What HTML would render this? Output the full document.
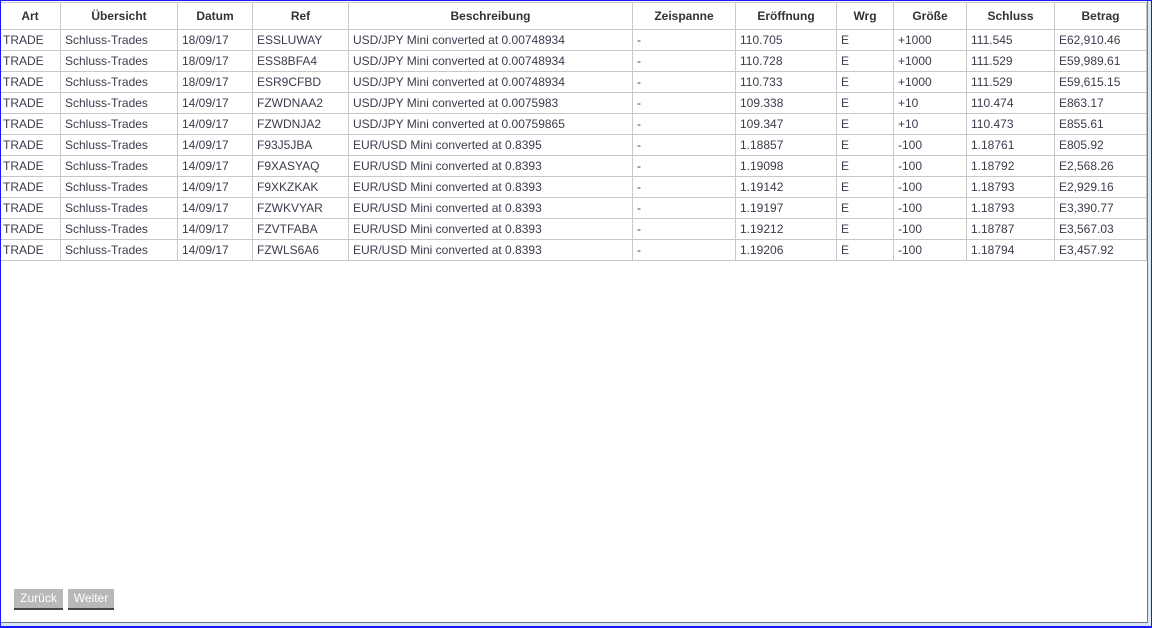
<!DOCTYPE html>
<html><head><meta charset="utf-8"><style>
html,body{margin:0;padding:0;}
body{width:1152px;height:628px;position:relative;overflow:hidden;background:#fff;font-family:"Liberation Sans",Arial,sans-serif;}
.bl{position:absolute;left:0;top:0;width:1px;height:628px;background:#1a1aff;}
.bt{position:absolute;left:0;top:0;width:1152px;height:1px;background:#1a1aff;}
.br{position:absolute;left:1151px;top:0;width:1px;height:628px;background:#1a1aff;}
.brg{position:absolute;left:1147px;top:0;width:1px;height:623px;background:#777;}
.brl{position:absolute;left:1148px;top:0;width:3px;height:626px;background:#dde8f6;}
.bbg{position:absolute;left:0;top:622px;width:1148px;height:1px;background:#777;}
.bbl{position:absolute;left:0;top:623px;width:1151px;height:3px;background:#d6e6fa;}
.bb{position:absolute;left:0;top:626px;width:1152px;height:2px;background:#1a1aff;}
table{position:absolute;left:-1px;top:2px;border-collapse:collapse;table-layout:fixed;width:1147px;font-size:12px;color:#3e3a4c;}
th,td{border:1px solid #c8c8c8;padding:0 0 0 4px;white-space:nowrap;overflow:hidden;text-align:left;}
th{height:26px;font-weight:bold;color:#333;text-align:center;padding:0;}
td{height:20px;}
td:first-child{padding-left:3px;}
.btn{position:absolute;top:589px;height:19px;background:#b8b8b8;color:#fff;font-size:12px;line-height:19px;text-align:center;border-bottom:2px solid #444;}
</style></head><body>
<table>
<colgroup><col style="width:61px"><col style="width:117px"><col style="width:75px"><col style="width:96px"><col style="width:284px"><col style="width:103px"><col style="width:101px"><col style="width:57px"><col style="width:73px"><col style="width:88px"><col style="width:92px"></colgroup>
<tr><th>Art</th><th>Übersicht</th><th>Datum</th><th>Ref</th><th>Beschreibung</th><th>Zeispanne</th><th>Eröffnung</th><th>Wrg</th><th>Größe</th><th>Schluss</th><th>Betrag</th></tr>
<tr><td>TRADE</td><td>Schluss-Trades</td><td>18/09/17</td><td>ESSLUWAY</td><td>USD/JPY Mini converted at 0.00748934</td><td>-</td><td>110.705</td><td>E</td><td>+1000</td><td>111.545</td><td>E62,910.46</td></tr>
<tr><td>TRADE</td><td>Schluss-Trades</td><td>18/09/17</td><td>ESS8BFA4</td><td>USD/JPY Mini converted at 0.00748934</td><td>-</td><td>110.728</td><td>E</td><td>+1000</td><td>111.529</td><td>E59,989.61</td></tr>
<tr><td>TRADE</td><td>Schluss-Trades</td><td>18/09/17</td><td>ESR9CFBD</td><td>USD/JPY Mini converted at 0.00748934</td><td>-</td><td>110.733</td><td>E</td><td>+1000</td><td>111.529</td><td>E59,615.15</td></tr>
<tr><td>TRADE</td><td>Schluss-Trades</td><td>14/09/17</td><td>FZWDNAA2</td><td>USD/JPY Mini converted at 0.0075983</td><td>-</td><td>109.338</td><td>E</td><td>+10</td><td>110.474</td><td>E863.17</td></tr>
<tr><td>TRADE</td><td>Schluss-Trades</td><td>14/09/17</td><td>FZWDNJA2</td><td>USD/JPY Mini converted at 0.00759865</td><td>-</td><td>109.347</td><td>E</td><td>+10</td><td>110.473</td><td>E855.61</td></tr>
<tr><td>TRADE</td><td>Schluss-Trades</td><td>14/09/17</td><td>F93J5JBA</td><td>EUR/USD Mini converted at 0.8395</td><td>-</td><td>1.18857</td><td>E</td><td>-100</td><td>1.18761</td><td>E805.92</td></tr>
<tr><td>TRADE</td><td>Schluss-Trades</td><td>14/09/17</td><td>F9XASYAQ</td><td>EUR/USD Mini converted at 0.8393</td><td>-</td><td>1.19098</td><td>E</td><td>-100</td><td>1.18792</td><td>E2,568.26</td></tr>
<tr><td>TRADE</td><td>Schluss-Trades</td><td>14/09/17</td><td>F9XKZKAK</td><td>EUR/USD Mini converted at 0.8393</td><td>-</td><td>1.19142</td><td>E</td><td>-100</td><td>1.18793</td><td>E2,929.16</td></tr>
<tr><td>TRADE</td><td>Schluss-Trades</td><td>14/09/17</td><td>FZWKVYAR</td><td>EUR/USD Mini converted at 0.8393</td><td>-</td><td>1.19197</td><td>E</td><td>-100</td><td>1.18793</td><td>E3,390.77</td></tr>
<tr><td>TRADE</td><td>Schluss-Trades</td><td>14/09/17</td><td>FZVTFABA</td><td>EUR/USD Mini converted at 0.8393</td><td>-</td><td>1.19212</td><td>E</td><td>-100</td><td>1.18787</td><td>E3,567.03</td></tr>
<tr><td>TRADE</td><td>Schluss-Trades</td><td>14/09/17</td><td>FZWLS6A6</td><td>EUR/USD Mini converted at 0.8393</td><td>-</td><td>1.19206</td><td>E</td><td>-100</td><td>1.18794</td><td>E3,457.92</td></tr>
</table>
<div class="btn" style="left:14px;width:49px;">Zurück</div>
<div class="btn" style="left:68px;width:46px;">Weiter</div>
<div class="brl"></div><div class="bbl"></div><div class="brg"></div><div class="bbg"></div>
<div class="bt"></div><div class="bl"></div><div class="br"></div><div class="bb"></div>
</body></html>
